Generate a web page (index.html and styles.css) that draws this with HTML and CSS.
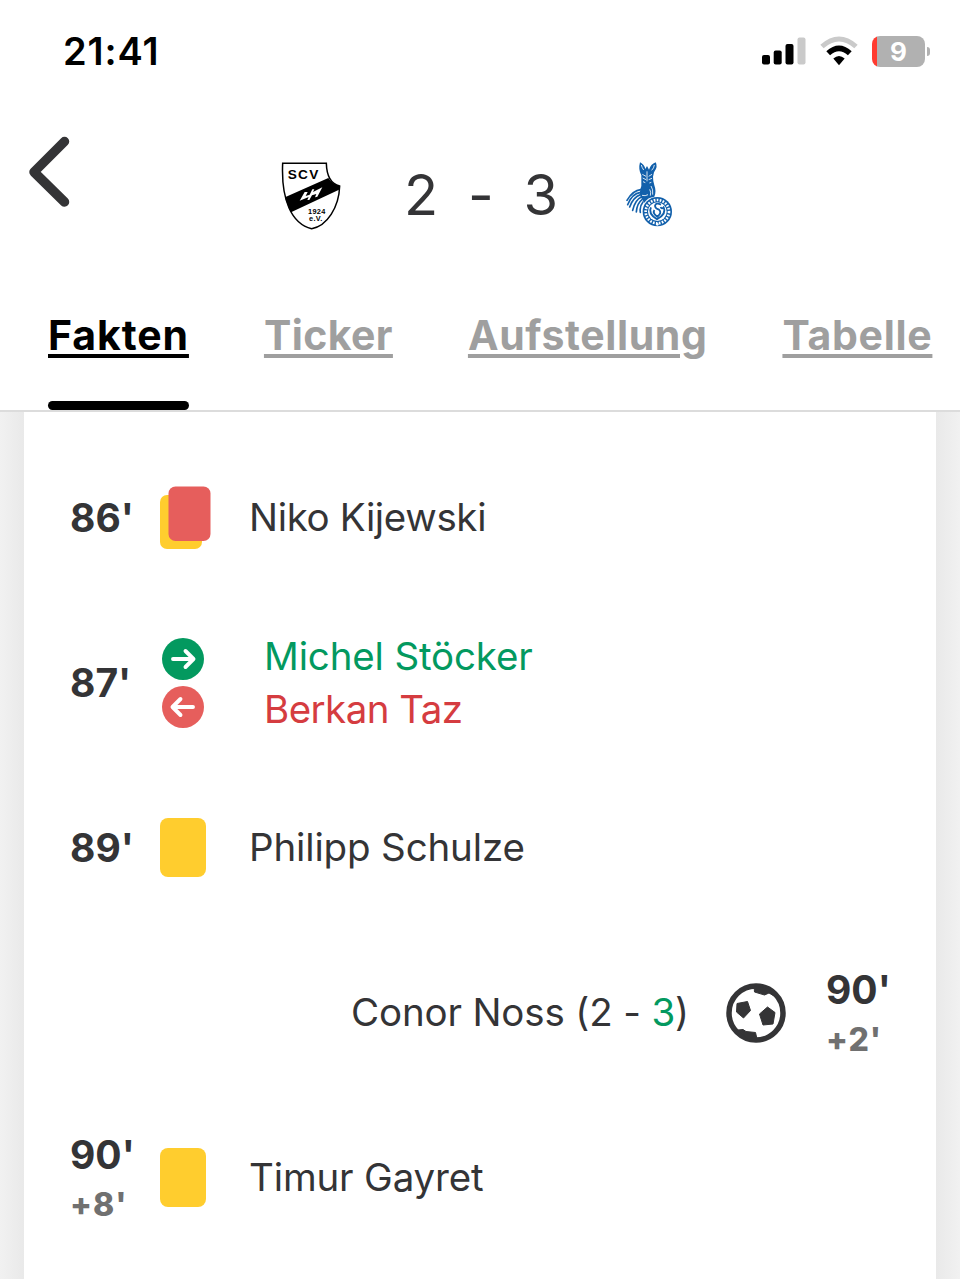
FILE: index.html
```html
<!DOCTYPE html>
<html lang="de">
<head>
<meta charset="UTF-8">
<meta name="viewport" content="width=device-width, initial-scale=1.0">
<title>SC Verl - MSV Duisburg</title>
<link rel="stylesheet" href="styles.css">
</head>
<body>

<div class="status-bar">
  <span class="clock">21:41</span>
  <svg class="signal" viewBox="0 0 44 28" width="44" height="28">
    <rect x="0" y="18" width="8" height="9.500" rx="2"/>
    <rect x="11.700" y="13.500" width="8" height="14" rx="2"/>
    <rect x="23.500" y="7" width="8" height="20.500" rx="2"/>
    <rect x="35.500" y="0.500" width="8" height="27" rx="2" fill="#cacaca"/>
  </svg>
  <svg class="wifi" viewBox="0 0 38 30" width="38" height="30">
    <path d="M2 10.500 Q19 -4.500 36 10.500" fill="none" stroke="#cacaca" stroke-width="5"/>
    <path d="M8.200 17.300 Q19 7.500 29.800 17.300" fill="none" stroke="#000" stroke-width="5.600"/>
    <path d="M13.300 22.500 Q19 17.500 24.700 22.500 L19 29.300 Z"/>
  </svg>
  <div class="battery"><span>9</span></div>
  <i class="battery-cap"></i>
</div>

<header class="match">
  <svg class="back" viewBox="0 0 44 72" width="44" height="72">
    <path d="M36.500 5.500 L6 36 L36.500 66" fill="none" stroke="#343436" stroke-width="9.500" stroke-linecap="round" stroke-linejoin="round"/>
  </svg>
  <svg class="crest-home" viewBox="48 36 180 204" width="60" height="68">
    <path d="M53 40 H184 C185 76 196 102 224 108 C222 172 186 228 140 236 C80 222 48 150 53 40 Z" fill="#fff" stroke="#000" stroke-width="4.500"/>
    <path d="M60 142 L190 84 Q203 104 224 108 L222 119 L78 187 Q67 166 60 142 Z"/>
    <path d="M104 152 L119 126 L128 126 L122 138 L134 134 L142 118 L148 118 L144 126 L172 112 L157 140 L150 142 L154 132 L141 136 L133 150 L127 150 L131 141 Z" fill="#fff"/>
    <text class="crest-name" x="68" y="87">SCV</text>
    <text class="crest-year" x="129" y="192">1924</text>
    <text class="crest-year" x="132" y="214">e.V.</text>
  </svg>
  <div class="score"><span>2</span><span>-</span><span>3</span></div>
  <svg class="crest-away" viewBox="45 36 144 195" width="48" height="65">
    <!-- zebra head and neck -->
    <path d="M87 37 Q100 43 103 57 L108 48 L114 59 Q119 43 134 37 Q142 50 129 67 L126 80 Q126 94 130 106 Q137 124 130 140 Q110 142 100 158 L89 141 Q84 126 91 108 L91 76 Q81 58 87 37 Z" fill="#1260ab"/>
    <g fill="none" stroke="#fff" stroke-width="2.500">
      <path d="M91 45 Q93 53 98 60 M130 45 Q129 54 122 61"/>
      <path d="M94 73 L105 79 M123 73 L113 79 M95 84 L105 89 M123 85 L113 89 M96 95 L103 98 M121 97 L115 99"/>
      <path d="M108 64 V94"/>
      <path d="M120 108 Q127 118 125 134 M116 118 Q121 126 118 137 M93 136 Q103 139 111 134"/>
    </g>
    <!-- mane -->
    <g fill="none" stroke="#1260ab" stroke-width="5" stroke-linecap="round">
      <path d="M89 119 Q66 121 48 151 M89 127 Q62 131 50 164 M89 134 Q67 141 56 171 M91 141 Q72 150 65 181 M93 149 Q78 160 76 186 M96 156 Q85 169 88 187"/>
    </g>
    <circle cx="139" cy="185" r="44" fill="#1260ab"/>
    <circle cx="139" cy="185" r="35" fill="none" stroke="#fff" stroke-width="8" stroke-dasharray="5 4"/>
    <circle cx="139" cy="185" r="28" fill="#fff"/>
    <path d="M150 164 Q134 156 132 168 Q133 176 144 179 Q154 188 139 200 Q124 190 130 180 M120 172 Q110 190 138 208 Q168 190 158 172 Q152 179 149 171" fill="none" stroke="#1260ab" stroke-width="5.500"/>
    <circle cx="139" cy="223" r="4" fill="#fff"/>
  </svg>
</header>

<nav class="tabs">
  <a class="tab fakten active">Fakten</a>
  <a class="tab ticker">Ticker</a>
  <a class="tab aufstellung">Aufstellung</a>
  <a class="tab tabelle">Tabelle</a>
</nav>

<main class="page">
  <div class="events">
    <div class="event">
      <div class="minute">86'</div>
      <div class="icon">
        <svg viewBox="0 0 52 64" width="52" height="64">
          <rect x="0" y="9" width="42" height="54" rx="7" fill="#ffcd2e"/>
          <rect x="8.500" y="0.500" width="42" height="54.500" rx="7" fill="#e65e5c"/>
        </svg>
      </div>
      <div class="player tight">Niko Kijewski</div>
    </div>

    <div class="event">
      <div class="minute">87'</div>
      <div class="icon subs">
        <svg viewBox="0 0 42 42" width="42" height="42">
          <circle cx="21" cy="21" r="21" fill="#03995f"/>
          <path d="M11 21 H31 M23.500 13 L31.500 21 L23.500 29" fill="none" stroke="#fff" stroke-width="3.900" stroke-linecap="round" stroke-linejoin="round"/>
        </svg>
        <svg viewBox="0 0 42 42" width="42" height="42">
          <circle cx="21" cy="21" r="21" fill="#e65e5c"/>
          <path d="M31 21 H11 M18.500 13 L10.500 21 L18.500 29" fill="none" stroke="#fff" stroke-width="3.900" stroke-linecap="round" stroke-linejoin="round"/>
        </svg>
      </div>
      <div class="player change">
        <div class="in">Michel Stöcker</div>
        <div class="out">Berkan Taz</div>
      </div>
    </div>

    <div class="event">
      <div class="minute">89'</div>
      <div class="icon"><div class="yellow-card"></div></div>
      <div class="player">Philipp Schulze</div>
    </div>

    <div class="event away">
      <div class="player">Conor Noss (2 - <span class="goal">3</span>)</div>
      <div class="icon ball">
        <svg viewBox="0 0 60 60" width="60" height="60">
          <circle cx="30" cy="30" r="27" fill="#fff" stroke="#343436" stroke-width="5.500"/>
          <g fill="#343436" stroke="#343436" stroke-width="1" stroke-linejoin="round">
            <path d="M11 20.500 L21.500 18.500 L24.500 27.500 L17.500 35 L10.500 29 Z"/>
            <path d="M41.500 24 L49 29.500 L47 41 L37 42 L33.500 31 Z"/>
            <path d="M28 3 L28.500 9 L38.500 12 L43 10 L48 13 L42 5 Z"/>
            <path d="M12 47 L17 46.500 L20 48.500 L29.500 49.500 L31 56 L22 56 Z"/>
          </g>
        </svg>
      </div>
      <div class="minute extra">90'<small>+2'</small></div>
    </div>

    <div class="event">
      <div class="minute extra">90'<small>+8'</small></div>
      <div class="icon"><div class="yellow-card"></div></div>
      <div class="player">Timur Gayret</div>
    </div>
  </div>
</main>

</body>
</html>
```

FILE: styles.css
```css
* {
  box-sizing: border-box;
}
body {
  margin: 0;
  height: 1279px;
  overflow: hidden;
  display: flex;
  flex-direction: column;
  background-color: #fff;
  color: #343436;
  font-family: Inter, "Liberation Sans", sans-serif;
}
svg {
  display: block;
  flex: none;
}

/* Status bar */
.status-bar {
  display: flex;
  align-items: center;
  height: 102px;
  padding: 0 30px 0 63px;
}
.clock {
  font-size: 38px;
  font-weight: 600;
  letter-spacing: 0.9px;
  color: #000;
  margin-right: auto;
}
.wifi {
  margin-left: 14px;
}
.battery {
  width: 53px;
  height: 31px;
  margin-left: 14px;
  border-radius: 8px;
  background: linear-gradient(to right, #ff3b30 5px, #b1b1b1 5px);
  color: #fff;
  font-size: 26px;
  font-weight: 700;
  line-height: 31px;
  text-align: center;
}
.battery-cap {
  width: 3px;
  height: 9px;
  margin-left: 2px;
  border-radius: 0 4px 4px 0;
  background-color: #b1b1b1;
}

/* Score header */
.match {
  display: flex;
  align-items: flex-start;
  height: 190px;
  padding: 34px 0 0 28px;
}
.crest-home {
  margin: 26px 0 0 209px;
}
.score {
  display: flex;
  justify-content: space-between;
  width: 154px;
  margin: 25px 0 0 63px;
  font-size: 56px;
  line-height: 68px;
}
.crest-away {
  margin: 26px 0 0 68px;
}
.crest-name {
  font: bold 41px "Liberation Sans", sans-serif;
  letter-spacing: 4px;
}
.crest-year {
  font: bold 22px "Liberation Sans", sans-serif;
  letter-spacing: 1px;
}

/* Tabs */
.tabs {
  display: flex;
  gap: 75px;
  height: 120px;
  padding: 18px 0 0 48px;
  border-bottom: 2px solid #dcdcdc;
}
.tab {
  position: relative;
  height: 100px;
  color: #9f9f9f;
  font-size: 41px;
  font-weight: 700;
  line-height: 50px;
  white-space: nowrap;
  text-decoration: underline;
  text-decoration-thickness: 4px;
  text-underline-offset: 4px;
}
.fakten {
  letter-spacing: 0.9px;
}
.ticker {
  letter-spacing: 0.4px;
}
.aufstellung {
  letter-spacing: 0.6px;
}
.tabelle {
  letter-spacing: 0.7px;
}
.tab.active {
  color: #000;
}
.tab.active::after {
  content: "";
  position: absolute;
  left: 0;
  right: 0;
  bottom: 0;
  height: 9px;
  border-radius: 5px;
  background-color: #000;
}

/* Match events */
.page {
  flex: 1;
  padding: 0 24px;
  background: linear-gradient(to right, #f1f1f1, #e9e9e9 24px, #e9e9e9 936px, #f1f1f1);
}
.events {
  height: 100%;
  padding-top: 23px;
  background-color: #fff;
}
.event {
  display: flex;
  align-items: center;
  height: 165px;
  padding-left: 46px;
}
.event.away {
  justify-content: flex-end;
  padding: 0 44px 0 0;
}
.minute {
  width: 90px;
  font-size: 39px;
  font-weight: 700;
  line-height: 50px;
  letter-spacing: 0;
}
.minute.extra {
  padding-top: 3px;
}
.minute small {
  display: block;
  color: #707070;
  font-size: 32px;
  font-weight: 800;
  line-height: 49px;
  letter-spacing: 1px;
}
.icon {
  width: 89px;
}
.subs {
  padding-left: 2px;
}
.subs svg + svg {
  margin-top: 6px;
}
.yellow-card {
  width: 46px;
  height: 59px;
  border-radius: 8px;
  background-color: #ffcd2e;
}
.player {
  font-size: 38.5px;
  line-height: 53px;
  letter-spacing: -0.15px;
  white-space: nowrap;
}
.player.tight {
  letter-spacing: -0.35px;
}
.change {
  padding-left: 15px;
}
.in,
.goal {
  color: #03995f;
}
.out {
  color: #d53c40;
  letter-spacing: -0.55px;
}
.ball {
  width: 60px;
  margin: 0 40px 0 37px;
}
.away .minute {
  width: 66px;
}
```
